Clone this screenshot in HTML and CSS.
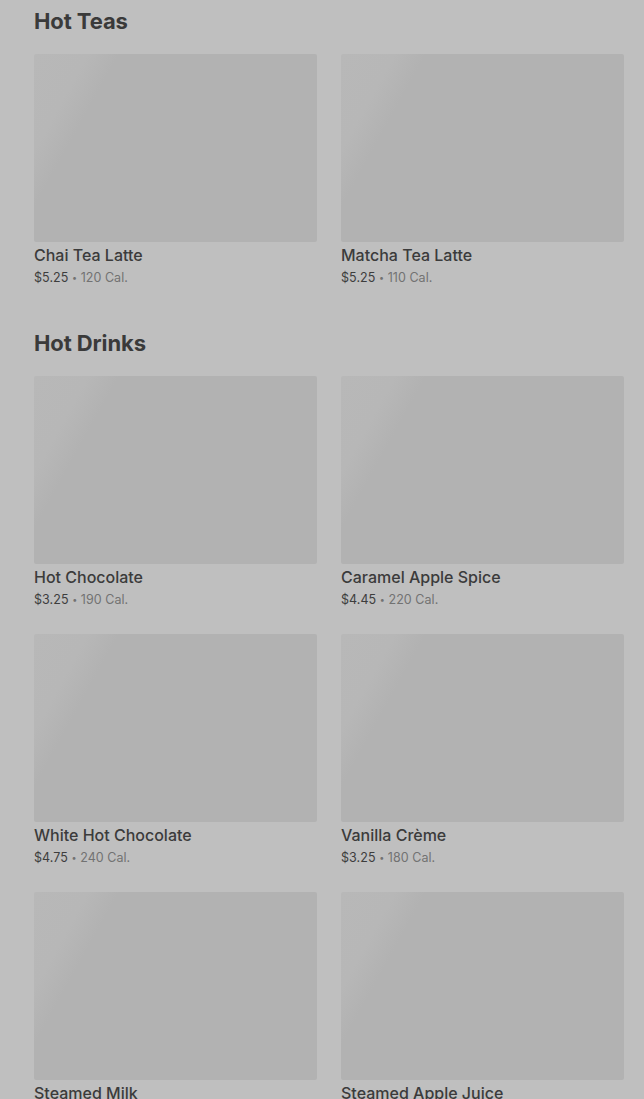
FILE: index.html
```html
<!DOCTYPE html>
<html lang="en">
<head>
  <meta charset="UTF-8">
  <title>Menu</title>
  <link rel="stylesheet" href="styles.css">
</head>
<body>

  <section class="menu-section">
    <h2>Hot Teas</h2>
    <div class="grid">
      <div class="item">
        <div class="thumb"></div>
        <div class="name">Chai Tea Latte</div>
        <div class="meta"><span class="price">$5.25</span> <span class="dot">•</span> 120 Cal.</div>
      </div>
      <div class="item">
        <div class="thumb"></div>
        <div class="name">Matcha Tea Latte</div>
        <div class="meta"><span class="price">$5.25</span> <span class="dot">•</span> 110 Cal.</div>
      </div>
    </div>
  </section>

  <section class="menu-section">
    <h2>Hot Drinks</h2>
    <div class="grid">
      <div class="item">
        <div class="thumb"></div>
        <div class="name">Hot Chocolate</div>
        <div class="meta"><span class="price">$3.25</span> <span class="dot">•</span> 190 Cal.</div>
      </div>
      <div class="item">
        <div class="thumb"></div>
        <div class="name">Caramel Apple Spice</div>
        <div class="meta"><span class="price">$4.45</span> <span class="dot">•</span> 220 Cal.</div>
      </div>
      <div class="item">
        <div class="thumb"></div>
        <div class="name">White Hot Chocolate</div>
        <div class="meta"><span class="price">$4.75</span> <span class="dot">•</span> 240 Cal.</div>
      </div>
      <div class="item">
        <div class="thumb"></div>
        <div class="name">Vanilla Crème</div>
        <div class="meta"><span class="price">$3.25</span> <span class="dot">•</span> 180 Cal.</div>
      </div>
      <div class="item">
        <div class="thumb"></div>
        <div class="name">Steamed Milk</div>
        <div class="meta"><span class="price">$3.25</span> <span class="dot">•</span> 160 Cal.</div>
      </div>
      <div class="item">
        <div class="thumb"></div>
        <div class="name">Steamed Apple Juice</div>
        <div class="meta"><span class="price">$3.45</span> <span class="dot">•</span> 170 Cal.</div>
      </div>
    </div>
  </section>

</body>
</html>
```

FILE: styles.css
```css
body {
  margin: 0;
  padding: 7px 20px 0 34px;
  background-color: #bfbfbf;
  font-family: Inter, "Noto Sans", sans-serif;
  color: #3b3b3b;
}

.menu-section {
  margin-bottom: 42px;
}

h2 {
  margin: 0 0 19px;
  font-size: 22px;
  line-height: 28px;
  font-weight: 700;
  letter-spacing: -0.1px;
  color: #3a3a3a;
}

.grid {
  display: grid;
  grid-template-columns: 1fr 1fr;
  column-gap: 24px;
  row-gap: 25px;
}

.thumb {
  height: 188px;
  border-radius: 2px;
  background: linear-gradient(119deg, #b8b8b8 0, #b7b7b7 14%, #b2b2b2 22%, #b2b2b2 100%);
}

.name {
  padding-top: 2px;
  font-size: 16px;
  line-height: 22px;
  font-weight: 500;
  color: #3b3b3b;
}

.meta {
  margin-top: 3px;
  font-size: 12.5px;
  line-height: 18px;
  letter-spacing: 0.05px;
  color: #727272;
}

.price {
  color: #3d3d3d;
}

.dot {
  font-size: 9px;
  vertical-align: 1px;
}
```
